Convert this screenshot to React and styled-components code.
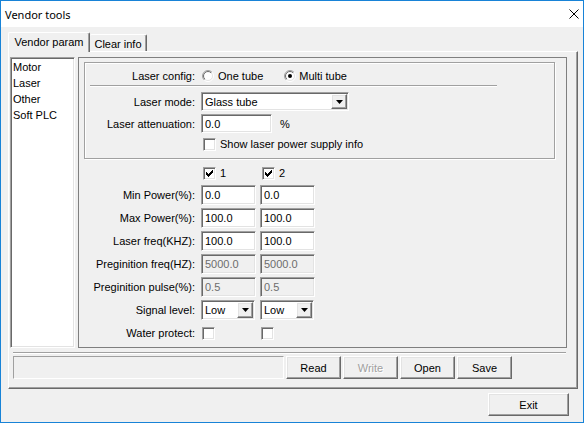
import styled, { createGlobalStyle, css } from 'styled-components'

const GlobalStyle = createGlobalStyle`
  html, body {
    margin: 0;
    padding: 0;
    background: #fff;
  }
  body {
    font-family: "Liberation Sans", Arial, sans-serif;
    font-size: 11px;
    color: #000;
  }
  * {
    box-sizing: border-box;
  }
`

const sunken = css`
  border: 1px solid;
  border-color: #a0a0a0 #fff #fff #a0a0a0;
  box-shadow: inset 1px 1px #696969, inset -1px -1px #e3e3e3;
`

const raised = css`
  border: 1px solid;
  border-color: #fff #696969 #696969 #fff;
  box-shadow: inset -1px -1px #a0a0a0, inset 1px 1px #e3e3e3;
`

const Window = styled.div`
  width: 584px;
  height: 423px;
  border: 1px solid #1883d7;
  background: #f0f0f0;
  display: flex;
  flex-direction: column;
`

const TitleBar = styled.div`
  height: 26px;
  flex-shrink: 0;
  background: #fff;
  display: flex;
  align-items: center;
  justify-content: space-between;
  padding: 0 4px 0 4px;
  font-family: "Noto Sans", sans-serif;
  font-size: 11px;
`

const Body = styled.div`
  display: flex;
  flex-direction: column;
  padding: 5px 4px 0 7px;
`

const TabStrip = styled.div`
  display: flex;
  align-items: flex-end;
  height: 19px;
`

const Tab = styled.div`
  position: relative;
  background: #f0f0f0;
  display: flex;
  justify-content: center;
  border-top: 1px solid #fff;
  border-right: 1px solid #696969;
  box-shadow: inset -1px 0 #a0a0a0;
  border-radius: 2px 2px 0 0;
  ${(p) =>
    p.$active
      ? css`
          width: 82px;
          height: 20px;
          margin-bottom: -1px;
          padding-top: 3px;
          border-left: 1px solid #fff;
          z-index: 2;
        `
      : css`
          width: 57px;
          height: 17px;
          padding-top: 3px;
        `}
`

const TabPage = styled.div`
  width: 570px;
  height: 338px;
  border-top: 1px solid #fff;
  border-left: 1px solid #fff;
  border-right: 1px solid #696969;
  border-bottom: 1px solid #696969;
  box-shadow: inset -1px -1px #a0a0a0;
  padding: 5px 10px 0 1px;
  display: flex;
  flex-direction: column;
`

const PageMain = styled.div`
  display: flex;
  gap: 3px;
  height: 291px;
`

const ListBox = styled.div`
  ${sunken};
  width: 65px;
  background: #fff;
  padding: 1px 0 0 2px;
`

const ListItem = styled.div`
  height: 16px;
  line-height: 16px;
`

const Panel = styled.div`
  flex: 1;
  border: 1px solid #7f7f7f;
  padding: 4px 0 0 5px;
  display: flex;
  flex-direction: column;
`

const GroupBox = styled.div`
  width: 471px;
  height: 97px;
  border: 1px solid #a0a0a0;
  box-shadow: inset 1px 1px #fff, 1px 1px #fff;
  padding: 3px 0 0 1px;
  display: flex;
  flex-direction: column;
`

const FormRow = styled.div`
  display: grid;
  grid-template-columns: 111px 1fr;
  column-gap: 4px;
  align-items: center;
  height: ${(p) => p.$h || 19}px;
  margin-top: ${(p) => p.$mt || 0}px;
`

const Label = styled.div`
  text-align: right;
  padding-right: 2px;
  white-space: nowrap;
`

const Etched = styled.div`
  margin-left: 4px;
  width: 407px;
  height: 2px;
  border-top: 1px solid #a0a0a0;
  border-bottom: 1px solid #fff;
`

const Inline = styled.div`
  display: flex;
  align-items: center;
  gap: ${(p) => p.$gap || 4}px;
  margin-left: ${(p) => p.$ml || 0}px;
`

const Field = styled.input`
  ${sunken};
  width: ${(p) => p.$w || 55}px;
  height: ${(p) => p.$h || 20}px;
  padding: 0 0 0 3px;
  margin: 0;
  font: inherit;
  color: #000;
  background: #fff;
  outline: none;

  &:disabled {
    background: #f0f0f0;
    color: #6d6d6d;
  }
`

const Combo = styled.div`
  ${sunken};
  width: ${(p) => p.$w || 55}px;
  height: ${(p) => p.$h || 20}px;
  background: #fff;
  display: flex;
  align-items: center;
  justify-content: space-between;
  padding: 1px 1px 1px 3px;
`

const ComboButton = styled.div`
  ${raised};
  width: 16px;
  height: 100%;
  background: #f0f0f0;
  display: flex;
  align-items: center;
  justify-content: center;
`

const Box = styled.span`
  ${sunken};
  width: 13px;
  height: 13px;
  background: #fff;
  display: inline-flex;
  align-items: center;
  justify-content: center;
  flex-shrink: 0;
  margin-left: ${(p) => p.$ml || 0}px;
`

const ChannelGrid = styled.div`
  margin-top: 5px;
  display: grid;
  grid-template-columns: 113px 55px 55px;
  grid-template-rows: 18px repeat(7, 20px);
  column-gap: 4px;
  row-gap: 3px;
  align-items: center;
`

const Separator = styled.div`
  margin: 4px 1px 0 3px;
  height: 2px;
  border-top: 1px solid #a0a0a0;
  border-bottom: 1px solid #fff;
`

const ActionRow = styled.div`
  display: flex;
  gap: 2px;
  margin: 2px 0 0 3px;
`

const StatusBox = styled.div`
  width: 271px;
  height: 23px;
  border: 1px solid;
  border-color: #a0a0a0 #fff #fff #a0a0a0;
`

const Button = styled.button`
  ${raised};
  width: ${(p) => p.$w || 55}px;
  height: 23px;
  margin: 0;
  padding: 0;
  background: #f0f0f0;
  font: inherit;
  color: #000;

  &:disabled {
    color: #a0a0a0;
    text-shadow: 1px 1px #fff;
  }
`

const Footer = styled.div`
  display: flex;
  justify-content: flex-end;
  margin-top: 4px;
  padding-right: 10px;
`

const CheckMark = () => (
  <svg width="7" height="7" viewBox="0 0 7 7" shapeRendering="crispEdges">
    {[
      [6, 0, 1], [5, 1, 2], [0, 2, 1], [4, 2, 3], [0, 3, 2],
      [3, 3, 3], [0, 4, 5], [1, 5, 3], [2, 6, 1],
    ].map(([x, y, w], i) => (
      <rect key={i} x={x} y={y} width={w} height="1" fill="#000" />
    ))}
  </svg>
)

const Check = ({ checked, ml }) => <Box $ml={ml}>{checked && <CheckMark />}</Box>

const Radio = ({ checked }) => (
  <svg width="12" height="12" viewBox="0 0 12 12">
    <defs>
      <linearGradient id="rOuter" x1="0" y1="0" x2="1" y2="1">
        <stop offset="0.5" stopColor="#a0a0a0" />
        <stop offset="0.5" stopColor="#ffffff" />
      </linearGradient>
      <linearGradient id="rInner" x1="0" y1="0" x2="1" y2="1">
        <stop offset="0.5" stopColor="#696969" />
        <stop offset="0.5" stopColor="#e3e3e3" />
      </linearGradient>
    </defs>
    <circle cx="6" cy="6" r="5.5" fill="none" stroke="url(#rOuter)" />
    <circle cx="6" cy="6" r="4.5" fill="#fff" stroke="url(#rInner)" />
    {checked && <circle cx="6" cy="6" r="2" fill="#000" />}
  </svg>
)

const Arrow = () => (
  <svg width="7" height="4" viewBox="0 0 7 4">
    <polygon points="0,0 7,0 3.5,4" fill="#000" />
  </svg>
)

const Select = ({ value, w, h }) => (
  <Combo $w={w} $h={h}>
    <span>{value}</span>
    <ComboButton>
      <Arrow />
    </ComboButton>
  </Combo>
)

const CloseIcon = () => (
  <svg width="10" height="10" viewBox="0 0 10 10">
    <path d="M0.5 0.5 L9.5 9.5 M9.5 0.5 L0.5 9.5" stroke="#000" strokeWidth="1" />
  </svg>
)

const rows = [
  { label: 'Min Power(%):', a: '0.0', b: '0.0' },
  { label: 'Max Power(%):', a: '100.0', b: '100.0' },
  { label: 'Laser freq(KHZ):', a: '100.0', b: '100.0' },
  { label: 'Preginition freq(HZ):', a: '5000.0', b: '5000.0', off: true },
  { label: 'Preginition pulse(%):', a: '0.5', b: '0.5', off: true },
]

const App = () => {
  return (
    <Window>
      <GlobalStyle />
      <TitleBar>
        <span>Vendor tools</span>
        <CloseIcon />
      </TitleBar>
      <Body>
        <TabStrip>
          <Tab $active>Vendor param</Tab>
          <Tab>Clear info</Tab>
        </TabStrip>
        <TabPage>
          <PageMain>
            <ListBox>
              <ListItem>Motor</ListItem>
              <ListItem>Laser</ListItem>
              <ListItem>Other</ListItem>
              <ListItem>Soft PLC</ListItem>
            </ListBox>
            <Panel>
              <GroupBox>
                <FormRow>
                  <Label>Laser config:</Label>
                  <Inline $gap={21} $ml={1}>
                    <Inline $gap={4}>
                      <Radio />
                      <span>One tube</span>
                    </Inline>
                    <Inline $gap={3}>
                      <Radio checked />
                      <span>Multi tube</span>
                    </Inline>
                  </Inline>
                </FormRow>
                <Etched />
                <FormRow $mt={5}>
                  <Label>Laser mode:</Label>
                  <Select value="Glass tube" w={148} h={19} />
                </FormRow>
                <FormRow $mt={3}>
                  <Label>Laser attenuation:</Label>
                  <Inline $gap={8}>
                    <Field $w={71} $h={19} defaultValue="0.0" />
                    <span>%</span>
                  </Inline>
                </FormRow>
                <FormRow $mt={2} $h={18}>
                  <span />
                  <Inline $gap={4} $ml={2}>
                    <Check />
                    <span>Show laser power supply info</span>
                  </Inline>
                </FormRow>
              </GroupBox>
              <ChannelGrid>
                <span />
                <Inline $gap={4} $ml={2}>
                  <Check checked />
                  <span>1</span>
                </Inline>
                <Inline $gap={4} $ml={2}>
                  <Check checked />
                  <span>2</span>
                </Inline>
                {rows.map((r) => (
                  <>
                    <Label key={r.label}>{r.label}</Label>
                    <Field defaultValue={r.a} disabled={r.off} />
                    <Field defaultValue={r.b} disabled={r.off} />
                  </>
                ))}
                <Label>Signal level:</Label>
                <Select value="Low" w={54} />
                <Select value="Low" w={54} />
                <Label>Water protect:</Label>
                <Check ml={1} />
                <Check ml={1} />
              </ChannelGrid>
            </Panel>
          </PageMain>
          <Separator />
          <ActionRow>
            <StatusBox />
            <Button>Read</Button>
            <Button disabled>Write</Button>
            <Button>Open</Button>
            <Button>Save</Button>
          </ActionRow>
        </TabPage>
        <Footer>
          <Button $w={81}>Exit</Button>
        </Footer>
      </Body>
    </Window>
  )
}

export default App
